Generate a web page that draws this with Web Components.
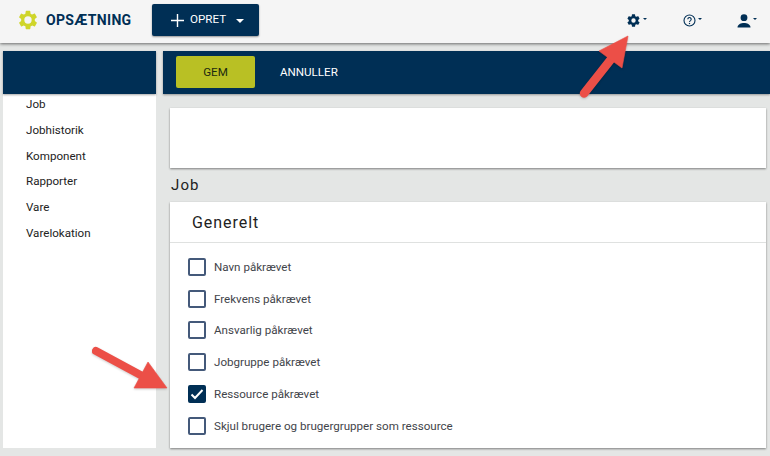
<!DOCTYPE html>
<html lang="da"><head><meta charset="utf-8"><title>Opsætning</title>
<style>
html,body{margin:0;padding:0;height:456px;overflow:hidden;background:#e4e6e5;font-family:Roboto,sans-serif}
</style></head><body>
<template id="t-app"><style>
:host{display:block;position:relative;width:770px;height:456px;overflow:hidden}
.body{display:grid;grid-template-columns:153px 1fr;column-gap:7px;padding:8px 0 0 3px;height:405px;box-sizing:border-box}
.arrows{position:absolute;left:0;top:0;pointer-events:none;z-index:5;filter:drop-shadow(0 1px 1px rgba(0,0,0,.2))}
</style>
<app-topbar></app-topbar>
<div class="body"><app-sidebar></app-sidebar><app-main></app-main></div>
<svg class="arrows" width="770" height="456" viewBox="0 0 770 456">
<g fill="#ec4f47" stroke="#ec4f47" stroke-linejoin="round">
<path d="M584 93.500 L612 58" stroke-width="8.500" stroke-linecap="round"/>
<path d="M628 36 L599 51 L622 68Z" stroke-width=".6"/>
<path d="M96 351 L146 378" stroke-width="8" stroke-linecap="round"/>
<path d="M167 388 L148 362 L134 388Z" stroke-width=".6"/>
</g></svg></template>

<template id="t-topbar"><style>
:host{display:flex;align-items:flex-start;height:43px;background:#f5f5f5;box-shadow:0 1px 3px rgba(0,0,0,.55);position:relative;z-index:2;color:#002f55}
.logo{display:flex;align-items:center;gap:7px;margin:9px 0 0 17px;height:22px;width:135px;flex:none;font:700 14px/18px Roboto,sans-serif;letter-spacing:.33px}
.logo svg{flex:none}
.create{flex:none;margin-top:4px;width:107px;height:32px;border-radius:2px;background:#002f55;color:#fff;box-shadow:0 1px 2px rgba(0,0,0,.4);display:flex;align-items:center;font:400 11.6px/16px Roboto,sans-serif;box-sizing:border-box;padding-left:18px}
.create .lab{margin-left:5px;margin-top:-3px}
.create .car{margin-left:10px;width:0;height:0;border:4.500px solid transparent;border-top-color:#fff;border-bottom:0;margin-top:1px}
.icons{margin-left:auto;display:flex;align-items:center;margin-top:13px;padding-right:13px;gap:0}
.ic{display:flex;align-items:center;height:15px;position:relative}
.ic i{display:block;width:0;height:0;border:2.500px solid transparent;border-top-color:#002f55;border-bottom:0;margin-left:2px;margin-top:-3px}
</style>
<div class="logo"><svg width="22" height="22" viewBox="0 0 24 24"><path fill="#cfd52a" d="M19.4 13c.04-.3.1-.65.1-1s-.06-.7-.1-1l2.1-1.65c.2-.15.25-.42.12-.64l-2-3.46c-.12-.22-.4-.3-.6-.22l-2.5 1c-.52-.4-1.08-.73-1.700-.98l-.37-2.65A.5.5 0 0 0 14 2h-4a.5.5 0 0 0-.5.42l-.37 2.65c-.62.25-1.18.58-1.700.98l-2.500-1c-.22-.08-.48 0-.6.22l-2 3.46c-.13.22-.07.49.12.64L4.570 11c-.04.3-.07.65-.07 1s.03.7.07 1l-2.110 1.650c-.19.15-.25.42-.12.64l2 3.46c.12.22.38.3.6.22l2.490-1c.52.4 1.080.73 1.700.98l.37 2.650c.04.24.25.42.5.42h4c.25 0 .46-.18.5-.42l.37-2.650c.62-.25 1.180-.58 1.700-.98l2.490 1c.22.08.48 0 .6-.22l2-3.460c.12-.22.07-.49-.12-.64L19.400 13zM12 16a4 4 0 1 1 0-8 4 4 0 0 1 0 8z"/></svg><span>OPSÆTNING</span></div>
<div class="create"><svg width="15" height="15" viewBox="0 0 15 15"><path d="M7.500 1v13M1 7.500h13" stroke="#fff" stroke-width="1.400"/></svg><span class="lab">OPRET</span><span class="car"></span></div>
<div class="icons">
<span class="ic" style="margin-right:36px"><svg width="15" height="15" viewBox="0 0 24 24"><path fill="#002f55" d="M19.400 13c.04-.3.1-.65.1-1s-.06-.7-.1-1l2.100-1.650c.2-.15.25-.42.12-.64l-2-3.460c-.12-.22-.4-.3-.6-.22l-2.500 1c-.52-.4-1.080-.73-1.700-.98l-.37-2.650A.5.5 0 0 0 14 2h-4a.5.5 0 0 0-.5.42l-.37 2.650c-.62.25-1.180.58-1.700.98l-2.500-1c-.22-.08-.48 0-.6.22l-2 3.460c-.13.22-.07.49.12.64L4.570 11c-.04.3-.07.65-.07 1s.03.7.07 1l-2.110 1.650c-.19.15-.25.42-.12.64l2 3.460c.12.22.38.3.6.22l2.490-1c.52.4 1.080.73 1.700.98l.37 2.650c.04.24.25.42.5.42h4c.25 0 .46-.18.5-.42l.37-2.650c.62-.25 1.180-.58 1.700-.98l2.490 1c.22.08.48 0 .6-.22l2-3.460c.12-.22.07-.49-.12-.64L19.400 13zM12 15.500a3.500 3.500 0 1 1 0-7 3.500 3.500 0 0 1 0 7z"/></svg><i></i></span>
<span class="ic" style="margin-right:35px"><svg width="13" height="13" viewBox="0 0 13 13"><circle cx="6.500" cy="6.500" r="5.500" fill="none" stroke="#002f55" stroke-width="1.100"/><path d="M4.800 5.200a1.700 1.700 0 1 1 2.700 1.400c-.6.4-1 .7-1 1.400" fill="none" stroke="#002f55" stroke-width="1.100"/><rect x="5.900" y="8.900" width="1.200" height="1.200" fill="#002f55"/></svg><i></i></span>
<span class="ic"><svg width="14" height="14" viewBox="0 0 14 14"><circle cx="7" cy="3.700" r="3.400" fill="#002f55"/><path d="M.5 13.500c0-3 3.600-4.400 6.500-4.400s6.500 1.400 6.500 4.400z" fill="#002f55"/></svg><i></i></span>
</div></template>

<template id="t-sidebar"><style>
:host{display:block;background:#fff;position:relative}
.head{height:43px;background:#002f55;box-shadow:0 1px 2px rgba(0,0,0,.35)}
ul{list-style:none;margin:0;padding:0 0 0 23px;font:400 11.6px/25.800px Roboto,sans-serif;color:#222;margin-top:-2px}
</style><div class="head"></div><ul><li>Job</li><li>Jobhistorik</li><li>Komponent</li><li>Rapporter</li><li>Vare</li><li>Varelokation</li></ul></template>

<template id="t-main"><style>
:host{display:block;min-width:0}
.bar{height:43px;background:#002f55;box-shadow:0 1px 2px rgba(0,0,0,.35);display:flex;align-items:flex-start;padding-left:13px;font:400 11.6px/16px Roboto,sans-serif;position:relative}
.save{margin-top:5px;width:79px;height:32px;background:#b9c024;color:#1c2a10;border-radius:2px;display:flex;align-items:center;justify-content:center}
.cancel{margin:13px 0 0 25px;color:#fff}
.content{padding:14px 4px 0 7px}
.blank{height:60px;background:#fff;box-shadow:0 1px 2px rgba(0,0,0,.45)}
h2{margin:0;font:400 15px/18px Roboto,sans-serif;letter-spacing:1.100px;color:#222;padding:8px 0 0 1px;height:26px}
.card{background:#fff;box-shadow:0 1px 2px rgba(0,0,0,.45);height:246px;box-sizing:border-box}
.title{height:40px;border-bottom:1px solid #dfe1e0;padding-left:22px;font:400 16px/42px Roboto,sans-serif;letter-spacing:.95px;color:#222}
.list{padding-top:8px;padding-left:18px;display:flex;flex-direction:column}
</style>
<div class="bar"><span class="save">GEM</span><span class="cancel">ANNULLER</span></div>
<div class="content"><div class="blank"></div><h2>Job</h2>
<div class="card"><div class="title">Generelt</div><div class="list">
<app-check>Navn påkrævet</app-check><app-check>Frekvens påkrævet</app-check><app-check>Ansvarlig påkrævet</app-check><app-check>Jobgruppe påkrævet</app-check><app-check checked>Ressource påkrævet</app-check><app-check>Skjul brugere og brugergrupper som ressource</app-check>
</div></div></div></template>

<template id="t-check"><style>
:host{display:flex;align-items:center;height:31.800px;font:400 11.6px/16px Roboto,sans-serif;color:#3f444a}
.box{width:18px;height:18px;box-sizing:border-box;border:2px solid #44597a;border-radius:2px;margin-right:8px;flex:none;display:flex}
:host([checked]) .box{background:#002f55;border-color:#002f55}
svg{display:none}
:host([checked]) svg{display:block}
</style><span class="box"><svg width="14" height="14" viewBox="0 0 14 14"><path d="M1.500 7.500l3.500 3.500 7.500-8" fill="none" stroke="#fff" stroke-width="2"/></svg></span><slot></slot></template>

<app-root></app-root>
<script>
const def=(n,t)=>customElements.define(n,class extends HTMLElement{constructor(){super();this.attachShadow({mode:'open'}).appendChild(document.getElementById(t).content.cloneNode(true))}});
def('app-check','t-check');def('app-topbar','t-topbar');def('app-sidebar','t-sidebar');def('app-main','t-main');def('app-root','t-app');
</script>
</body></html>
